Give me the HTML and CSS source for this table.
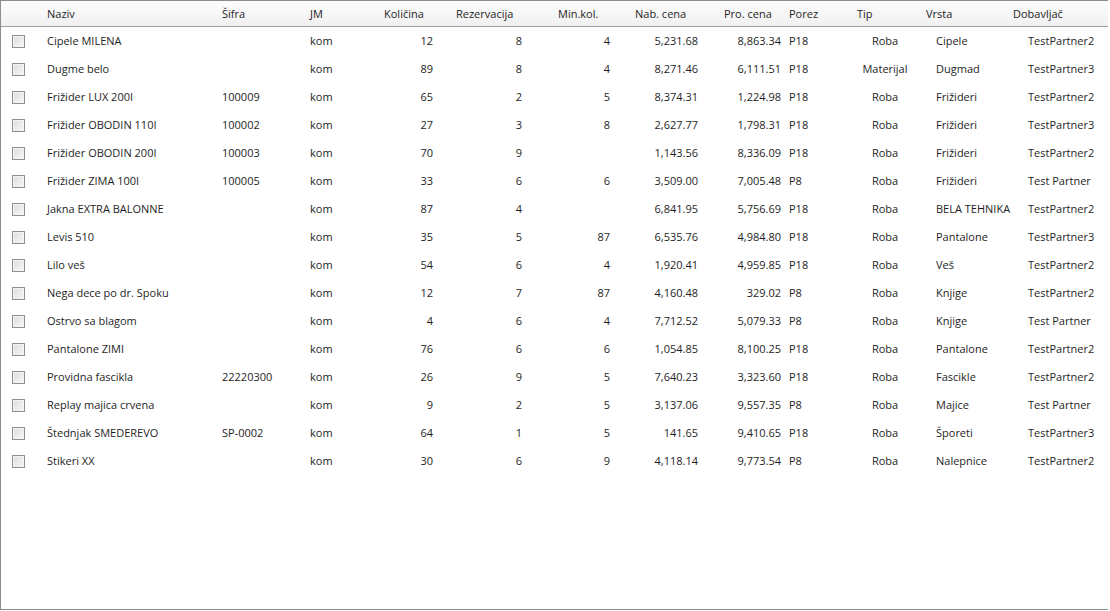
FILE: index.html
```html
<!DOCTYPE html>
<html lang="sr">
<head>
<meta charset="utf-8">
<title>Artikli</title>
<link rel="stylesheet" href="styles.css">
</head>
<body>
<div class="grid">
  <div class="head">
    <div></div>
    <div>Naziv</div><div>Šifra</div><div>JM</div><div>Količina</div><div>Rezervacija</div><div>Min.kol.</div><div>Nab. cena</div><div>Pro. cena</div><div>Porez</div><div>Tip</div><div>Vrsta</div><div>Dobavljač</div>
  </div>
  <div class="body">
    <div class="row"><div class="c-chk"><span class="chk"></span></div><div class="c-l">Cipele MILENA</div><div class="c-l"></div><div class="c-l">kom</div><div class="c-r">12</div><div class="c-r">8</div><div class="c-r">4</div><div class="c-r">5,231.68</div><div class="c-r c-pro">8,863.34</div><div class="c-porez">P18</div><div class="c-c">Roba</div><div class="c-vrsta">Cipele</div><div class="c-dob">TestPartner2</div></div>
    <div class="row"><div class="c-chk"><span class="chk"></span></div><div class="c-l">Dugme belo</div><div class="c-l"></div><div class="c-l">kom</div><div class="c-r">89</div><div class="c-r">8</div><div class="c-r">4</div><div class="c-r">8,271.46</div><div class="c-r c-pro">6,111.51</div><div class="c-porez">P18</div><div class="c-c">Materijal</div><div class="c-vrsta">Dugmad</div><div class="c-dob">TestPartner3</div></div>
    <div class="row"><div class="c-chk"><span class="chk"></span></div><div class="c-l">Frižider LUX 200I</div><div class="c-l">100009</div><div class="c-l">kom</div><div class="c-r">65</div><div class="c-r">2</div><div class="c-r">5</div><div class="c-r">8,374.31</div><div class="c-r c-pro">1,224.98</div><div class="c-porez">P18</div><div class="c-c">Roba</div><div class="c-vrsta">Frižideri</div><div class="c-dob">TestPartner2</div></div>
    <div class="row"><div class="c-chk"><span class="chk"></span></div><div class="c-l">Frižider OBODIN 110I</div><div class="c-l">100002</div><div class="c-l">kom</div><div class="c-r">27</div><div class="c-r">3</div><div class="c-r">8</div><div class="c-r">2,627.77</div><div class="c-r c-pro">1,798.31</div><div class="c-porez">P18</div><div class="c-c">Roba</div><div class="c-vrsta">Frižideri</div><div class="c-dob">TestPartner3</div></div>
    <div class="row"><div class="c-chk"><span class="chk"></span></div><div class="c-l">Frižider OBODIN 200I</div><div class="c-l">100003</div><div class="c-l">kom</div><div class="c-r">70</div><div class="c-r">9</div><div class="c-r"></div><div class="c-r">1,143.56</div><div class="c-r c-pro">8,336.09</div><div class="c-porez">P18</div><div class="c-c">Roba</div><div class="c-vrsta">Frižideri</div><div class="c-dob">TestPartner2</div></div>
    <div class="row"><div class="c-chk"><span class="chk"></span></div><div class="c-l">Frižider ZIMA 100I</div><div class="c-l">100005</div><div class="c-l">kom</div><div class="c-r">33</div><div class="c-r">6</div><div class="c-r">6</div><div class="c-r">3,509.00</div><div class="c-r c-pro">7,005.48</div><div class="c-porez">P8</div><div class="c-c">Roba</div><div class="c-vrsta">Frižideri</div><div class="c-dob">Test Partner</div></div>
    <div class="row"><div class="c-chk"><span class="chk"></span></div><div class="c-l">Jakna EXTRA BALONNE</div><div class="c-l"></div><div class="c-l">kom</div><div class="c-r">87</div><div class="c-r">4</div><div class="c-r"></div><div class="c-r">6,841.95</div><div class="c-r c-pro">5,756.69</div><div class="c-porez">P18</div><div class="c-c">Roba</div><div class="c-vrsta">BELA TEHNIKA</div><div class="c-dob">TestPartner2</div></div>
    <div class="row"><div class="c-chk"><span class="chk"></span></div><div class="c-l">Levis 510</div><div class="c-l"></div><div class="c-l">kom</div><div class="c-r">35</div><div class="c-r">5</div><div class="c-r">87</div><div class="c-r">6,535.76</div><div class="c-r c-pro">4,984.80</div><div class="c-porez">P18</div><div class="c-c">Roba</div><div class="c-vrsta">Pantalone</div><div class="c-dob">TestPartner3</div></div>
    <div class="row"><div class="c-chk"><span class="chk"></span></div><div class="c-l">Lilo veš</div><div class="c-l"></div><div class="c-l">kom</div><div class="c-r">54</div><div class="c-r">6</div><div class="c-r">4</div><div class="c-r">1,920.41</div><div class="c-r c-pro">4,959.85</div><div class="c-porez">P18</div><div class="c-c">Roba</div><div class="c-vrsta">Veš</div><div class="c-dob">TestPartner2</div></div>
    <div class="row"><div class="c-chk"><span class="chk"></span></div><div class="c-l">Nega dece po dr. Spoku</div><div class="c-l"></div><div class="c-l">kom</div><div class="c-r">12</div><div class="c-r">7</div><div class="c-r">87</div><div class="c-r">4,160.48</div><div class="c-r c-pro">329.02</div><div class="c-porez">P8</div><div class="c-c">Roba</div><div class="c-vrsta">Knjige</div><div class="c-dob">TestPartner2</div></div>
    <div class="row"><div class="c-chk"><span class="chk"></span></div><div class="c-l">Ostrvo sa blagom</div><div class="c-l"></div><div class="c-l">kom</div><div class="c-r">4</div><div class="c-r">6</div><div class="c-r">4</div><div class="c-r">7,712.52</div><div class="c-r c-pro">5,079.33</div><div class="c-porez">P8</div><div class="c-c">Roba</div><div class="c-vrsta">Knjige</div><div class="c-dob">Test Partner</div></div>
    <div class="row"><div class="c-chk"><span class="chk"></span></div><div class="c-l">Pantalone ZIMI</div><div class="c-l"></div><div class="c-l">kom</div><div class="c-r">76</div><div class="c-r">6</div><div class="c-r">6</div><div class="c-r">1,054.85</div><div class="c-r c-pro">8,100.25</div><div class="c-porez">P18</div><div class="c-c">Roba</div><div class="c-vrsta">Pantalone</div><div class="c-dob">TestPartner2</div></div>
    <div class="row"><div class="c-chk"><span class="chk"></span></div><div class="c-l">Providna fascikla</div><div class="c-l">22220300</div><div class="c-l">kom</div><div class="c-r">26</div><div class="c-r">9</div><div class="c-r">5</div><div class="c-r">7,640.23</div><div class="c-r c-pro">3,323.60</div><div class="c-porez">P18</div><div class="c-c">Roba</div><div class="c-vrsta">Fascikle</div><div class="c-dob">TestPartner2</div></div>
    <div class="row"><div class="c-chk"><span class="chk"></span></div><div class="c-l">Replay majica crvena</div><div class="c-l"></div><div class="c-l">kom</div><div class="c-r">9</div><div class="c-r">2</div><div class="c-r">5</div><div class="c-r">3,137.06</div><div class="c-r c-pro">9,557.35</div><div class="c-porez">P8</div><div class="c-c">Roba</div><div class="c-vrsta">Majice</div><div class="c-dob">Test Partner</div></div>
    <div class="row"><div class="c-chk"><span class="chk"></span></div><div class="c-l">Štednjak SMEDEREVO</div><div class="c-l">SP-0002</div><div class="c-l">kom</div><div class="c-r">64</div><div class="c-r">1</div><div class="c-r">5</div><div class="c-r">141.65</div><div class="c-r c-pro">9,410.65</div><div class="c-porez">P18</div><div class="c-c">Roba</div><div class="c-vrsta">Šporeti</div><div class="c-dob">TestPartner3</div></div>
    <div class="row"><div class="c-chk"><span class="chk"></span></div><div class="c-l">Stikeri XX</div><div class="c-l"></div><div class="c-l">kom</div><div class="c-r">30</div><div class="c-r">6</div><div class="c-r">9</div><div class="c-r">4,118.14</div><div class="c-r c-pro">9,773.54</div><div class="c-porez">P8</div><div class="c-c">Roba</div><div class="c-vrsta">Nalepnice</div><div class="c-dob">TestPartner2</div></div>
  </div>
</div>
</body>
</html>
```
FILE: styles.css
```css
html, body {
  margin: 0;
  padding: 0;
  background: #ffffff;
}

body {
  font-family: "Open Sans", "Noto Sans", "DejaVu Sans", sans-serif;
  font-size: 11px;
  color: #1e1e1e;
}

.grid {
  box-sizing: border-box;
  width: 1108px;
  height: 610px;
  border: 1px solid #8d8d8d;
  border-right: 0;
  overflow: hidden;
}

.head {
  display: grid;
  grid-template-columns: 40px 175px 88px 74px 72px 102px 77px 89px 65px 68px 69px 87px 101px;
  height: 25px;
  line-height: 25px;
  background: linear-gradient(#fdfdfd, #f0f0f0);
  border-bottom: 1px solid #9f9f9f;
}

.head > div {
  padding-left: 6px;
  white-space: nowrap;
}

.row {
  display: grid;
  grid-template-columns: 40px 175px 88px 70px 66px 89px 88px 88px 80px 65px 70px 102px 86px;
  height: 28px;
  line-height: 28px;
}

.row > div {
  white-space: nowrap;
}

.c-chk {
  display: flex;
  align-items: flex-start;
}

.chk {
  box-sizing: border-box;
  width: 13px;
  height: 13px;
  margin: 8px 0 0 11px;
  border: 1px solid #8f8f8f;
  background: linear-gradient(135deg, #dcdcdc, #f7f7f7);
  box-shadow: inset 0 0 0 1px #f4f4f4;
}

.c-l {
  padding-left: 6px;
}

.c-r {
  text-align: right;
  padding-right: 7px;
}

.c-pro {
  padding-right: 4px;
}

.c-porez {
  padding-left: 4px;
}

.c-c {
  text-align: center;
}

.c-vrsta {
  padding-left: 16px;
}

.c-dob {
  padding-left: 6px;
}
```
